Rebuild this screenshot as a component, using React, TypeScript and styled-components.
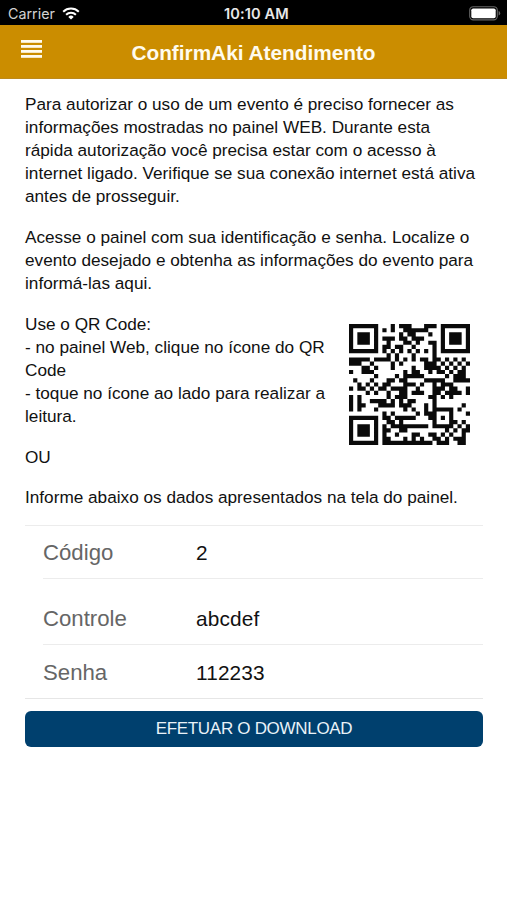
import React from "react";
import styled, { createGlobalStyle } from "styled-components";

const GlobalStyle = createGlobalStyle`
  * { box-sizing: border-box; }
  body { margin: 0; background: #fff; font-family: "Liberation Sans", Arial, sans-serif; }
`;

const Screen = styled.div`
  width: 507px;
  height: 900px;
  background: #fff;
  overflow: hidden;
  color: #111;
`;

const StatusBar = styled.div`
  display: grid;
  grid-template-columns: 1fr auto 1fr;
  align-items: center;
  height: 25px;
  padding: 2px 6px 0 8px;
  background: #000;
  color: #e8e8e8;
  font: 15px/20px Inter, sans-serif;
`;

const Carrier = styled.div`
  display: flex;
  align-items: center;
  gap: 7px;
  font-size: 14.3px;
  color: #d2d2d2;
`;

const Clock = styled.div`
  padding-left: 4px;
  font-size: 14.6px;
  font-weight: 600;
  letter-spacing: 0.1px;
`;

const BatterySlot = styled.div`
  display: flex;
  justify-content: flex-end;
`;

const NavBar = styled.header`
  display: grid;
  grid-template-columns: 62px 1fr 62px;
  align-items: center;
  height: 54px;
  background: #cb8d00;
  border-bottom: 1px solid #bd8a1c;
`;

const MenuButton = styled.button`
  border: 0;
  background: none;
  padding: 0 0 5px 21px;
  display: flex;
`;

const Title = styled.h1`
  margin: 0;
  padding-top: 2px;
  text-align: center;
  color: #fffbee;
  font-size: 20.8px;
  line-height: 24px;
  font-weight: 700;
  white-space: nowrap;
`;

const Content = styled.main`
  padding: 13.5px 24px 0 25px;
`;

const Paragraph = styled.p`
  margin: 0 0 17.2px;
  font-size: 17.2px;
  line-height: 23.2px;
  white-space: nowrap;
`;

const QrRow = styled.div`
  display: flex;
  justify-content: space-between;
  padding-right: 13px;
`;

const QrSvg = styled.svg`
  display: block;
  width: 121px;
  height: 121px;
  margin-top: 11.5px;
`;

const Form = styled.div`
  margin-top: -1.2px;
  border-top: 1px solid #ececec;
  border-bottom: 1px solid #e6e6e6;
`;

const Field = styled.label<{ $height: number; $last?: boolean }>`
  display: flex;
  align-items: flex-end;
  height: ${(p) => p.$height}px;
  margin-left: 18px;
  padding-bottom: 12px;
  border-bottom: ${(p) => (p.$last ? "0" : "1px solid #ececec")};
`;

const FieldName = styled.span`
  width: 153px;
  font-size: 22.2px;
  line-height: 26px;
  color: #666;
`;

const FieldValue = styled.span`
  font-size: 20.8px;
  line-height: 27px;
  letter-spacing: 0.15px;
  color: #111;
`;

const Download = styled.button`
  display: block;
  width: 100%;
  height: 36px;
  margin-top: 12px;
  padding: 0;
  border: 0;
  border-radius: 6px;
  background: #00406e;
  color: #e9f2f8;
  font: 17px/36px "Liberation Sans", Arial, sans-serif;
  letter-spacing: -0.3px;
`;

const MODULES = [
  "11111110001011100011101111111",
  "10000010101001111110001000001",
  "10111010000010110001001011101",
  "10111010111011011100001011101",
  "10111010010001101001101011101",
  "10000010110110010000101000001",
  "11111110101010101010101111111",
  "00000000010100010000100000000",
  "11111011110101010110110101010",
  "11100100001010000011101010101",
  "00011010001000010011110101010",
  "10011100000001011001011010110",
  "00000010000101111100000101110",
  "01000100011011000011111001111",
  "00101010110001110100101110000",
  "10110101101111001000111011001",
  "00001010010011011100110111101",
  "10100000010111000001101010000",
  "10100111101010110000100000000",
  "10110001111011100010100000010",
  "10100010000001010010111110100",
  "00000000101000001011100010001",
  "11111110110111110001101010000",
  "10000010011010000000100011010",
  "10111010101111111110111110101",
  "10111010110011000000000101011",
  "10111010100100011001101010010",
  "10000010110001010100110101110",
  "11111110111111111111011100110",
];

const QR_PATH = MODULES.map((row, y) =>
  [...row].map((m, x) => (m === "1" ? `M${x} ${y}h1v1h-1z` : "")).join("")
).join("");

const QrCode = () => (
  <QrSvg viewBox="0 0 29 29" aria-label="QR Code">
    <path d={QR_PATH} fill="#0a0a0a" />
  </QrSvg>
);

const Wifi = () => (
  <svg width="18" height="13" viewBox="0 0 18 13" fill="none" stroke="#fff" strokeWidth="2">
    <path d="M1.2 4.7a11.2 11.2 0 0 1 15.6 0M4.1 7.8a7 7 0 0 1 9.8 0" />
    <path d="M9 12.6 6.3 9.9a3.9 3.9 0 0 1 5.4 0z" fill="#fff" stroke="none" />
  </svg>
);

const Battery = () => (
  <svg width="32" height="15" viewBox="0 0 32 15">
    <rect x=".7" y=".7" width="27.6" height="13.2" rx="3.6" fill="none" stroke="#666" strokeWidth="1.1" />
    <rect x="2.3" y="2.4" width="24.4" height="9.8" rx="1.8" fill="#fff" />
    <path d="M29.6 5q1.6.6 1.6 2.3t-1.6 2.3z" fill="#666" />
  </svg>
);

const MenuIcon = () => (
  <svg width="21" height="18" viewBox="0 0 21 18" fill="#fffbee">
    <rect y="0" width="21" height="2.8" />
    <rect y="5" width="21" height="2.8" />
    <rect y="10" width="21" height="2.8" />
    <rect y="15" width="21" height="2.8" />
  </svg>
);

export default function App() {
  return (
    <Screen>
      <GlobalStyle />
      <StatusBar>
        <Carrier>Carrier <Wifi /></Carrier>
        <Clock>10:10 AM</Clock>
        <BatterySlot><Battery /></BatterySlot>
      </StatusBar>
      <NavBar>
        <MenuButton aria-label="Menu"><MenuIcon /></MenuButton>
        <Title>ConfirmAki Atendimento</Title>
      </NavBar>
      <Content>
        <Paragraph>
          Para autorizar o uso de um evento é preciso fornecer as<br />
          informações mostradas no painel WEB. Durante esta<br />
          rápida autorização você precisa estar com o acesso à<br />
          internet ligado. Verifique se sua conexão internet está ativa<br />
          antes de prosseguir.
        </Paragraph>
        <Paragraph>
          Acesse o painel com sua identificação e senha. Localize o<br />
          evento desejado e obtenha as informações do evento para<br />
          informá-las aqui.
        </Paragraph>
        <QrRow>
          <Paragraph>
            Use o QR Code:<br />
            - no painel Web, clique no ícone do QR<br />
            Code<br />
            - toque no ícone ao lado para realizar a<br />
            leitura.
          </Paragraph>
          <QrCode />
        </QrRow>
        <Paragraph>OU</Paragraph>
        <Paragraph>Informe abaixo os dados apresentados na tela do painel.</Paragraph>
        <Form>
          <Field $height={53}>
            <FieldName>Código</FieldName>
            <FieldValue>2</FieldValue>
          </Field>
          <Field $height={66}>
            <FieldName>Controle</FieldName>
            <FieldValue>abcdef</FieldValue>
          </Field>
          <Field $height={53} $last>
            <FieldName>Senha</FieldName>
            <FieldValue>112233</FieldValue>
          </Field>
        </Form>
        <Download>EFETUAR O DOWNLOAD</Download>
      </Content>
    </Screen>
  );
}
